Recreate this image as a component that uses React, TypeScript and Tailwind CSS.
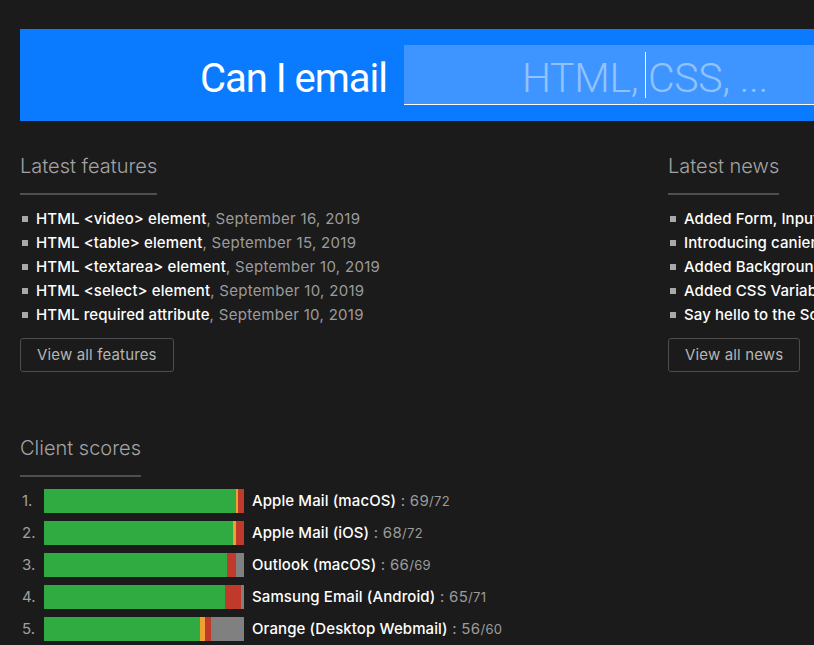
import React from "react";

const features = [
  { name: "HTML <video> element", date: "September 16, 2019" },
  { name: "HTML <table> element", date: "September 15, 2019" },
  { name: "HTML <textarea> element", date: "September 10, 2019" },
  { name: "HTML <select> element", date: "September 10, 2019" },
  { name: "HTML required attribute", date: "September 10, 2019" },
];

const news = [
  { name: "Added Form, Input and Button features", date: "September 12, 2019" },
  { name: "Introducing caniemail.com", date: "September 10, 2019" },
  { name: "Added Background features", date: "September 8, 2019" },
  { name: "Added CSS Variables", date: "September 6, 2019" },
  { name: "Say hello to the Scoreboard", date: "September 4, 2019" },
];

// segments in px out of a 200px bar: [green, orange, red, gray]
const clients = [
  { name: "Apple Mail (macOS)", score: 69, total: 72, seg: [192, 2, 6, 0] },
  { name: "Apple Mail (iOS)", score: 68, total: 72, seg: [189, 3, 8, 0] },
  { name: "Outlook (macOS)", score: 66, total: 69, seg: [183, 0, 9, 8] },
  { name: "Samsung Email (Android)", score: 65, total: 71, seg: [181, 0, 16, 3] },
  { name: "Orange (Desktop Webmail)", score: 56, total: 60, seg: [156, 5, 6, 33] },
];

const segColors = ["bg-[#30ab42]", "bg-[#eea032]", "bg-[#c1392b]", "bg-[#808080]"];

const Heading = ({ children }: { children: React.ReactNode }) => (
  <div className="inline-block">
    <h2 className="text-[20px] leading-[24px] font-light text-[#a3a3a3] pb-[15px] border-b-2 border-[#4f4f4f]">
      {children}
    </h2>
  </div>
);

const ListBlock = ({
  title,
  items,
  button,
}: {
  title: string;
  items: { name: string; date: string }[];
  button: string;
}) => (
  <section>
    <Heading>{title}</Heading>
    <ul className="mt-[12px] flex flex-col">
      {items.map((it) => (
        <li key={it.name} className="flex items-center h-[24px] whitespace-nowrap text-[15px]">
          <span className="w-[6px] h-[6px] bg-[#a9a9a9] ml-[2px] mr-[8px] shrink-0" />
          <span className="text-white font-medium tracking-[0.1px]">{it.name}</span>
          <span className="text-[#9b9b9b] tracking-[0.3px]">, {it.date}</span>
        </li>
      ))}
    </ul>
    <button className="mt-[11px] h-[34px] px-[16px] border border-[#4d4d4d] rounded-[3px] text-[15px] text-[#b5b5b5] tracking-[0.15px]">
      {button}
    </button>
  </section>
);

export default function App() {
  return (
    <div className="w-[814px] h-[645px] overflow-hidden bg-[#1b1b1b] font-['Inter',sans-serif]">
      <div className="w-[1316px] px-[20px] pt-[29px]">
        <header className="h-[92px] bg-[#0a7bff] flex items-start pt-[16px]">
          <div className="w-[384px] pr-[17px] pt-[10px] text-right text-white text-[40px] leading-[48px] tracking-[-1px] font-['Roboto',sans-serif]">
            Can I email
          </div>
          <div className="w-[482px] h-[60px] bg-[#3f95ff] border-b border-white flex items-center justify-center relative">
            <span className="text-[41px] leading-[48px] pt-[6px] text-[#93c2fb] font-light tracking-[-0.3px] font-['Roboto',sans-serif]">
              HTML, CSS, ...
            </span>
            <span className="absolute left-[241px] top-[7px] w-px h-[46px] bg-white" />
          </div>
        </header>

        <div className="grid grid-cols-[648px_1fr] mt-[33px]">
          <ListBlock title="Latest features" items={features} button="View all features" />
          <ListBlock title="Latest news" items={news} button="View all news" />
        </div>

        <section className="mt-[64px]">
          <Heading>Client scores</Heading>
          <ol className="mt-[12px] flex flex-col gap-[8px]">
            {clients.map((c, i) => (
              <li key={c.name} className="flex items-center h-[24px] whitespace-nowrap text-[15px]">
                <span className="w-[24px] text-[#a0a0a0] pl-[2px]">{i + 1}.</span>
                <div className="w-[200px] h-[24px] flex">
                  {c.seg.map((w, j) =>
                    w > 0 ? <div key={j} className={segColors[j]} style={{ width: w }} /> : null
                  )}
                </div>
                <span className="ml-[8px] text-white font-medium tracking-[0.1px]">{c.name}</span>
                <span className="text-[#9b9b9b] tracking-[0.3px]">
                  &nbsp;: {c.score}
                  <span className="text-[13px]">/{c.total}</span>
                </span>
              </li>
            ))}
          </ol>
        </section>
      </div>
    </div>
  );
}
